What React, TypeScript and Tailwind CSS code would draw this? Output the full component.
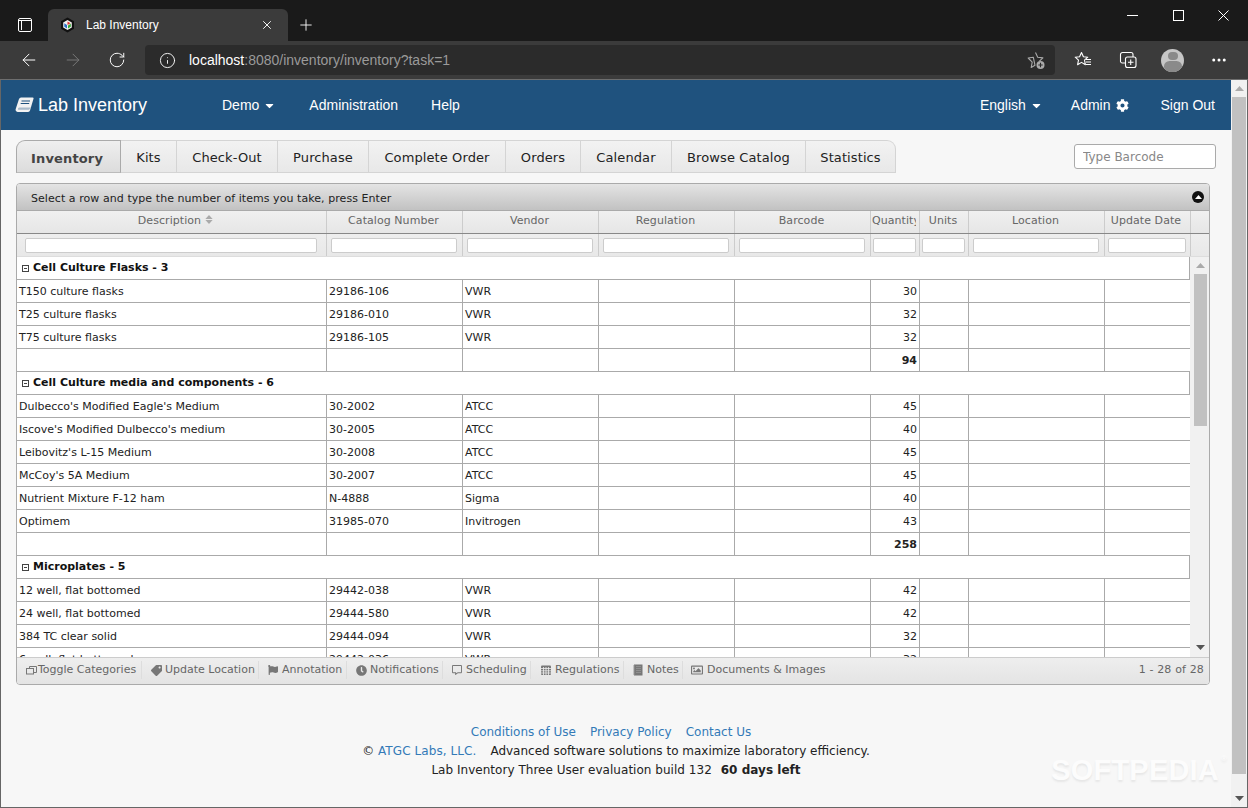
import React from "react";
import { ArrowLeft, ArrowRight, RotateCw, Info, X, Plus, MoreHorizontal } from "lucide-react";
import { FaCog, FaTag, FaFlag, FaClock, FaRegCommentAlt, FaRegImage, FaCaretDown } from "react-icons/fa";

const cols = "grid grid-cols-[310px_136px_136px_136px_136px_49px_49px_136px_86px]";
const tabs = ["Kits", "Check-Out", "Purchase", "Complete Order", "Orders", "Calendar", "Browse Catalog", "Statistics"];
const tabWidths = ["w-[56px]", "w-[101px]", "w-[91px]", "w-[137px]", "w-[75px]", "w-[91px]", "w-[134px]", "w-[90px]"];

type Row = { d: string; c: string; v: string; q: string };
const groups: { name: string; total: string; rows: Row[] }[] = [
  {
    name: "Cell Culture Flasks - 3",
    total: "94",
    rows: [
      { d: "T150 culture flasks", c: "29186-106", v: "VWR", q: "30" },
      { d: "T25 culture flasks", c: "29186-010", v: "VWR", q: "32" },
      { d: "T75 culture flasks", c: "29186-105", v: "VWR", q: "32" },
    ],
  },
  {
    name: "Cell Culture media and components - 6",
    total: "258",
    rows: [
      { d: "Dulbecco's Modified Eagle's Medium", c: "30-2002", v: "ATCC", q: "45" },
      { d: "Iscove's Modified Dulbecco's medium", c: "30-2005", v: "ATCC", q: "40" },
      { d: "Leibovitz's L-15 Medium", c: "30-2008", v: "ATCC", q: "45" },
      { d: "McCoy's 5A Medium", c: "30-2007", v: "ATCC", q: "45" },
      { d: "Nutrient Mixture F-12 ham", c: "N-4888", v: "Sigma", q: "40" },
      { d: "Optimem", c: "31985-070", v: "Invitrogen", q: "43" },
    ],
  },
  {
    name: "Microplates - 5",
    total: "",
    rows: [
      { d: "12 well, flat bottomed", c: "29442-038", v: "VWR", q: "42" },
      { d: "24 well, flat bottomed", c: "29444-580", v: "VWR", q: "42" },
      { d: "384 TC clear solid", c: "29444-094", v: "VWR", q: "32" },
      { d: "6 well, flat bottomed", c: "29442-036", v: "VWR", q: "32" },
    ],
  },
];

const cell = "h-[23px] border-r border-b border-[#aaa] px-[2px] leading-[24px] overflow-hidden whitespace-nowrap";

function DataRow({ r }: { r: Row }) {
  return (
    <div className={cols}>
      <div className={cell}>{r.d}</div>
      <div className={cell}>{r.c}</div>
      <div className={cell}>{r.v}</div>
      <div className={cell} />
      <div className={cell} />
      <div className={`${cell} text-right`}>{r.q}</div>
      <div className={cell} />
      <div className={cell} />
      <div className={cell} />
    </div>
  );
}

function TotalRow({ total }: { total: string }) {
  return (
    <div className={cols}>
      <div className={cell} />
      <div className={cell} />
      <div className={cell} />
      <div className={cell} />
      <div className={cell} />
      <div className={`${cell} text-right font-bold`}>{total}</div>
      <div className={cell} />
      <div className={cell} />
      <div className={cell} />
    </div>
  );
}

function Tri({ up, className }: { up?: boolean; className?: string }) {
  return (
    <svg width="9" height="5" viewBox="0 0 9 5" className={className}>
      <path d={up ? "M4.5 0L9 5H0z" : "M0 0h9L4.5 5z"} fill="currentColor" />
    </svg>
  );
}

function ToggleIcon() {
  return (
    <svg width="11" height="11" viewBox="0 0 11 11" fill="none" stroke="#777" strokeWidth="1">
      <path d="M3.500 3V1.500h7v6H8" />
      <rect x="0.500" y="3.500" width="7" height="5.500" />
    </svg>
  );
}
function GridIcon() {
  return (
    <svg width="12" height="12" viewBox="0 0 12 12">
      <rect x="1" y="1.500" width="10" height="9.500" rx="1" fill="#777" />
      <path d="M1 4.500h10M1 6.800h10M1 9h10M3.500 3v8M6 3v8M8.500 3v8" stroke="#eee" strokeWidth="0.8" />
    </svg>
  );
}
function NoteIcon() {
  return (
    <svg width="12" height="12" viewBox="0 0 12 12">
      <rect x="2" y="0.500" width="8.500" height="11" fill="#777" />
      <path d="M1 2h2M1 4h2M1 6h2M1 8h2M1 10h2" stroke="#999" />
      <path d="M4 2.500h5M4 4.500h5M4 6.500h5M4 8.500h5" stroke="#999" strokeWidth="0.7" />
    </svg>
  );
}
function BookIcon() {
  return (
    <svg width="19" height="18" viewBox="0 0 19 18" className="shrink-0">
      <path d="M6 1.500h11.500a1 1 0 0 1 1 1.300L15 14.500a2 2 0 0 1-1.900 1.500H3a2.300 2.300 0 0 1-2.300-3L4 3a2.600 2.600 0 0 1 2-1.500z" fill="#f2f2f2" />
      <path d="M6.500 5h8.500M5.700 7.500h8.500" stroke="#1f527e" strokeWidth="1" />
      <path d="M15.700 11.500H4.500a1.500 1.500 0 0 0-1.400 2.200h11" fill="#1f527e" opacity="0.35" />
    </svg>
  );
}

const tools: { label: string; icon: React.ReactNode; w: string; pl: string }[] = [
  { label: "Toggle Categories", icon: <ToggleIcon />, w: "w-[119px]", pl: "pl-[2px] gap-[1px]" },
  { label: "Update Location", icon: <FaTag size={11} color="#777" className="rotate-90" />, w: "w-[117px]", pl: "pl-[8px] gap-[3px]" },
  { label: "Annotation", icon: <FaFlag size={10} color="#777" />, w: "w-[88px]", pl: "pl-[8px] gap-[3px]" },
  { label: "Notifications", icon: <FaClock size={11} color="#777" />, w: "w-[96px]", pl: "pl-[8px] gap-[3px]" },
  { label: "Scheduling", icon: <FaRegCommentAlt size={10} color="#777" />, w: "w-[88px]", pl: "pl-[8px] gap-[3px]" },
  { label: "Regulations", icon: <GridIcon />, w: "w-[93px]", pl: "pl-[9px] gap-[3px]" },
  { label: "Notes", icon: <NoteIcon />, w: "w-[59px]", pl: "pl-[8px] gap-[3px]" },
  { label: "Documents & Images", icon: <FaRegImage size={12} color="#777" />, w: "w-[150px] !border-r-0", pl: "pl-[8px] gap-[4px]" },
];

export default function App() {
  return (
    <div className="w-[1248px] h-[808px] overflow-hidden flex flex-col bg-[#3b3b3b] font-['Liberation_Sans',sans-serif]">
      {/* Title bar */}
      <div className="h-[41px] shrink-0 bg-[#1a1a1a] flex items-end pl-[48px] relative">
        <div className="absolute left-[18px] top-[18px] w-[14px] h-[14px] border-[1.5px] border-white rounded-[2px]">
          <div className="h-[2px] border-b border-white" />
          <div className="w-[3px] h-[9px] border-r border-white" />
        </div>
        <div className="w-[240px] h-[32px] bg-[#3b3b3b] rounded-t-[6px] flex items-center pl-[12px] pr-[14px] text-[12px] text-white">
          <svg width="15" height="16" viewBox="0 0 15 16" className="shrink-0">
            <path d="M7.500 0.500L14 4.200v7.600l-6.500 3.700L1 11.800V4.200z" fill="#111" />
            <path d="M7.500 3L11.800 5.500v5L7.500 13l-4.300-2.500v-5z" fill="#f2f2f2" />
            <path d="M7.500 4.500L10.600 6.200 7.500 8z" fill="#d33" />
            <path d="M4.300 6.200L7 8v3.400L4.300 9.800z" fill="#2a6fc9" />
            <path d="M8 8.400l2.800-1.700v3L8 11.400z" fill="#3a3" />
          </svg>
          <span className="ml-[11px] flex-1">Lab Inventory</span>
          <X size={14} strokeWidth={1.6} />
        </div>
        <Plus size={18} strokeWidth={1.2} color="#fff" className="ml-[9px] mb-[7px]" />
        <div className="flex-1" />
        <div className="flex self-start pt-[10px] pr-[19px]">
          <svg width="11" height="11" viewBox="0 0 11 11" stroke="#fff" strokeWidth="1" fill="none">
            <path d="M0 5.500h11" />
          </svg>
          <svg width="11" height="11" viewBox="0 0 11 11" stroke="#fff" strokeWidth="1" fill="none" className="ml-[35px]">
            <rect x="0.500" y="0.500" width="10" height="10" />
          </svg>
          <svg width="11" height="11" viewBox="0 0 11 11" stroke="#fff" strokeWidth="1" fill="none" className="ml-[34px]">
            <path d="M0.500 0.500l10 10M10.500 0.500l-10 10" />
          </svg>
        </div>
      </div>
      {/* Toolbar */}
      <div className="h-[39px] shrink-0 bg-[#3b3b3b] border-b border-[#6e6e6e] flex items-center pl-[19px] text-white">
        <ArrowLeft size={20} strokeWidth={1.2} />
        <ArrowRight size={20} strokeWidth={1.2} color="#777" className="ml-[24px]" />
        <RotateCw size={18} strokeWidth={1.3} className="ml-[25px]" />
        <div className="ml-[19px] w-[910px] h-[30px] bg-[#2b2b2b] rounded-[4px] flex items-center pl-[14px] pr-[9px]">
          <Info size={17} strokeWidth={1.3} />
          <span className="ml-[13px] text-[14px] text-white">localhost<span className="text-[#9a9a9a]">:8080/inventory/inventory?task=1</span></span>
          <div className="flex-1" />
          <svg width="19" height="19" viewBox="0 0 19 19" fill="none" stroke="#aaa" strokeWidth="1.100">
            <path d="M8.500 1.500l2.200 4.700 5.200.7-3.700 3.500M8 14.300l-3.800 2.200 1-5.400L1.200 7l5.100-.8z" strokeLinejoin="round" />
            <circle cx="13.500" cy="14" r="4" fill="#aaa" stroke="none" />
            <path d="M13.500 11.800v4.400M11.300 14h4.400" stroke="#2b2b2b" />
          </svg>
        </div>
        <svg width="18" height="18" viewBox="0 0 18 18" fill="none" stroke="#fff" strokeWidth="1.100" className="ml-[19px]">
          <path d="M7.500 1.500l1.900 4.200 4.400.5-3.300 3 .9 4.500-3.900-2.300-3.900 2.300.9-4.500-3.300-3 4.400-.5z" strokeLinejoin="round" />
          <path d="M12 8.500h5M12 11h5M12 13.500h5" />
        </svg>
        <svg width="18" height="18" viewBox="0 0 18 18" fill="none" stroke="#fff" strokeWidth="1.100" className="ml-[27px]">
          <rect x="6.500" y="6" width="10.500" height="10.500" rx="2" />
          <path d="M11.700 8.500v5.500M9 11.200h5.500M14 6V3.500A2 2 0 0 0 12 1.500H3.500A2 2 0 0 0 1.500 3.500V9.500A2 2 0 0 0 3.500 12h3" />
        </svg>
        <div className="ml-[24px] w-[23px] h-[23px] rounded-full bg-[#c6c6c6] overflow-hidden flex flex-col items-center">
          <div className="w-[10px] h-[10px] rounded-full bg-[#8a8a8a] mt-[3px]" />
          <div className="w-[18px] h-[12px] rounded-full bg-[#8a8a8a] mt-[1px]" />
        </div>
        <MoreHorizontal size={18} strokeWidth={2} className="ml-[26px]" />
      </div>
      {/* Page */}
      <div className="flex-1 flex border-l border-r border-b border-[#666] min-h-0 relative">
        <main className="w-[1230px] bg-[#f7f7f7] font-['DejaVu_Sans',sans-serif] text-[11px] text-[#222] relative">
          <nav className="h-[50px] bg-[#1f527e] flex items-center text-white font-['Liberation_Sans',sans-serif] text-[14px]">
            <div className="flex items-center ml-[14px] w-[207px] text-[18px]">
              <span className="mr-[4px]"><BookIcon /></span>
              Lab Inventory
            </div>
            <span className="flex items-center">Demo<FaCaretDown size={13} className="ml-[4px]" /></span>
            <span className="ml-[33px]">Administration</span>
            <span className="ml-[33px]">Help</span>
            <div className="flex-1" />
            <span className="flex items-center">English<FaCaretDown size={13} className="ml-[4px]" /></span>
            <span className="flex items-center ml-[28px]">Admin<FaCog size={13} className="ml-[5px]" /></span>
            <span className="ml-[32px] mr-[16px]">Sign Out</span>
          </nav>
          <div className="flex items-start justify-between pl-[15px] pr-[15px] pt-[10px]">
            <div className="flex h-[33px] text-[13px] text-[#222] tracking-[0.1px]">
              <div className="pl-[14px] w-[105px] border border-b-[#bbb] border-[#aaa] rounded-tl-[9px] bg-gradient-to-b from-[#efefef] to-[#dcdcdc] font-bold text-[#444] leading-[35px] tracking-[0.15px]">Inventory</div>
              {tabs.map((t, i) => (
                <div
                  key={t}
                  className={`${tabWidths[i]} text-center border-r border-t border-b border-[#d4d4d4] bg-gradient-to-b from-[#f2f2f2] to-[#e8e8e8] leading-[34px] ${i === 7 ? "rounded-tr-[9px]" : ""}`}
                >
                  {t}
                </div>
              ))}
            </div>
            <input
              placeholder="Type Barcode"
              className="mt-[4px] w-[142px] h-[25px] bg-white border border-[#aaa] rounded-[3px] px-[8px] text-[12px] outline-none placeholder:text-[#888]"
            />
          </div>
          <div className="mt-[10px] ml-[15px] w-[1194px] h-[502px] border border-[#aaa] rounded-[4px] overflow-hidden bg-white flex flex-col">
            <div className="h-[27px] shrink-0 bg-gradient-to-b from-[#e4e4e4] to-[#c2c2c2] border-b border-[#aaa] flex items-center pl-[14px] pr-[5px] justify-between">
              <span className="mt-[4px] tracking-[0.06px]">Select a row and type the number of items you take, press Enter</span>
              <span className="w-[12px] h-[12px] rounded-full bg-[#111] flex items-center justify-center text-white">
                <Tri up className="w-[7px] h-[4px]" />
              </span>
            </div>
            <div className={`${cols} shrink-0 h-[23px] bg-gradient-to-b from-[#f0f0f0] to-[#e6e6e6] border-b border-[#888] text-[#666] tracking-[0.06px] leading-[19px]`}>
              <div className="border-r border-[#ccc] flex items-start justify-center pl-[8px] whitespace-nowrap">
                Description
                <span className="ml-[4px] mt-[4px] flex flex-col gap-[1px] text-[#aaa]">
                  <Tri up className="w-[8px] h-[4px]" />
                  <Tri className="w-[8px] h-[4px]" />
                </span>
              </div>
              <div className="border-r border-[#ccc] text-center pr-[2px]">Catalog Number</div>
              <div className="border-r border-[#ccc] text-center pr-[2px]">Vendor</div>
              <div className="border-r border-[#ccc] text-center pr-[2px]">Regulation</div>
              <div className="border-r border-[#ccc] text-center pr-[2px]">Barcode</div>
              <div className="border-r border-[#ccc] pl-[1px] pr-[3px] whitespace-nowrap overflow-hidden">
                <div className="overflow-hidden">Quantity</div>
              </div>
              <div className="border-r border-[#ccc] text-center pr-[2px]">Units</div>
              <div className="border-r border-[#ccc] text-center pr-[2px]">Location</div>
              <div className="border-r border-[#ccc] text-center pr-[3px] whitespace-nowrap">Update Date</div>
            </div>
            <div className={`${cols} h-[23px] shrink-0 bg-gradient-to-b from-[#eee] to-[#e8e8e8] border-b border-[#ddd]`}>
              {[[8, 292], [4, 126], [4, 126], [4, 126], [4, 126], [2, 43], [2, 43], [4, 126], [3, 78]].map(([ml, w], i) => (
                <div key={i} className="border-r border-[#ccc] flex items-center">
                  <input style={{ marginLeft: ml, width: w }} className="h-[15px] bg-white border border-[#ccc] rounded-[2px]" />
                </div>
              ))}
            </div>
            <div className="flex-1 min-h-0 flex">
              <div className="w-[1174px] overflow-hidden">
                {groups.map((g) => (
                  <div key={g.name}>
                    <div className="h-[23px] border-b border-r border-[#aaa] flex items-center pl-[5px] pb-[2px] font-bold text-[#111] leading-[21px]">
                      <span className="w-[7px] h-[7px] border border-[#444] mr-[4px] mt-[3px] flex items-center justify-center">
                        <span className="w-[3px] h-[1px] bg-[#444]" />
                      </span>
                      {g.name}
                    </div>
                    {g.rows.map((r) => (
                      <DataRow key={r.d} r={r} />
                    ))}
                    {g.total && <TotalRow total={g.total} />}
                  </div>
                ))}
              </div>
              <div className="w-[19px] bg-[#f1f1f1] flex flex-col items-center pl-[2px]">
                <Tri up className="text-[#aaa] mt-[6px] shrink-0" />
                <div className="w-[13px] h-[152px] bg-[#c1c1c1] mt-[6px]" />
                <div className="flex-1" />
                <Tri className="text-[#555] mb-[7px] shrink-0" />
              </div>
            </div>
            <div className="h-[27px] shrink-0 bg-gradient-to-b from-[#eeeeee] to-[#e4e4e4] border-t border-[#ccc] flex items-center pl-[6px] pr-[5px] pb-[2px] text-[#666]">
              {tools.map((t) => (
                <div key={t.label} className={`${t.w} ${t.pl} flex items-center h-[18px] border-r border-[#ddd] shrink-0 whitespace-nowrap`}>
                  <span className="w-[12px] flex justify-center shrink-0">{t.icon}</span>
                  {t.label}
                </div>
              ))}
              <div className="flex-1" />
              <span className="tracking-[0.15px]">1 - 28 of 28</span>
            </div>
          </div>
          <footer className="mt-[38px] text-center text-[12px] leading-[19px] text-[#222]">
            <div className="text-[#337ab7] flex justify-center gap-[14px] pr-[10px]">
              <span>Conditions of Use</span>
              <span>Privacy Policy</span>
              <span>Contact Us</span>
            </div>
            <div>
              © <span className="text-[#337ab7] tracking-[0.08px] mr-[14px]">ATGC Labs, LLC.</span>Advanced software solutions to maximize laboratory efficiency.
            </div>
            <div className="tracking-[0.03px]">
              Lab Inventory Three User evaluation build 132 <b className="ml-[5px]">60 days left</b>
            </div>
          </footer>
          <div className="absolute right-[12px] bottom-[22px] font-['Liberation_Sans',sans-serif] font-bold text-[29px] leading-none text-[#fcfcfc] [text-shadow:0_2px_2px_#e6e6e6] tracking-[0.2px]">
            SOFTPEDIA
            <span className="absolute -right-[8px] -top-[1px] text-[8px]">®</span>
          </div>
        </main>
        <div className="w-[16px] bg-[#f1f1f1] flex flex-col items-center">
          <Tri up className="text-[#aaa] mt-[6px] shrink-0" />
          <div className="w-[14px] h-[677px] bg-[#c1c1c1] mt-[6px]" />
          <div className="flex-1" />
          <Tri className="text-[#555] mb-[6px] shrink-0" />
        </div>
      </div>
    </div>
  );
}
